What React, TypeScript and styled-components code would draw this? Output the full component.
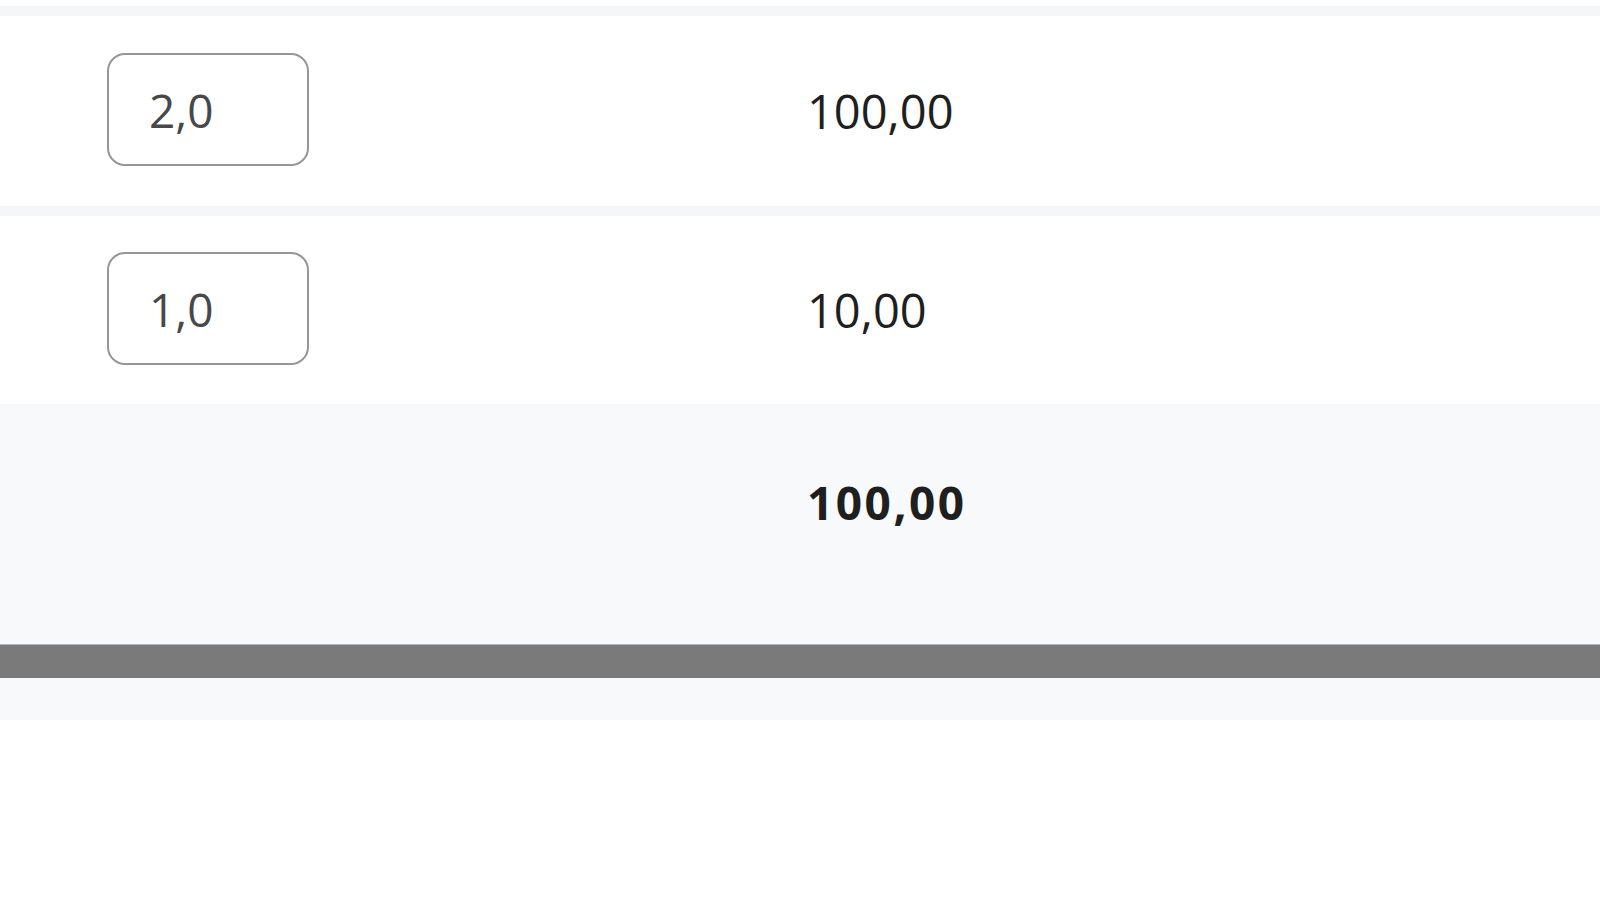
import React from "react";
import styled, { createGlobalStyle } from "styled-components";

const Global = createGlobalStyle`
  html, body { margin: 0; padding: 0; background: #ffffff; }
  body { font-family: "Open Sans", "Noto Sans", sans-serif; }
`;

const Page = styled.div`
  width: 1600px;
  height: 900px;
  background: #ffffff;
  padding-top: 6px;
  box-sizing: border-box;
  display: flex;
  flex-direction: column;
`;

const Divider = styled.div`
  height: 10px;
  background: #f5f6f7;
`;

const Row = styled.div<{ $h: number }>`
  height: ${(p) => p.$h}px;
  display: grid;
  grid-template-columns: 107px 700px 1fr;
  align-items: center;
  background: #ffffff;
`;

const TotalRow = styled.div`
  height: 240px;
  display: grid;
  grid-template-columns: 807px 1fr;
  align-items: start;
  background: #f8f9fa;
  padding-top: 75px;
  box-sizing: border-box;
`;

const QtyInput = styled.input`
  grid-column: 2;
  justify-self: start;
  width: 202px;
  height: 113px;
  margin-top: -3px;
  box-sizing: border-box;
  border: 2px solid #96969a;
  border-radius: 18px;
  padding: 0 0 0 40px;
  font-family: "Open Sans", "Noto Sans", sans-serif;
  font-size: 46px;
  color: #48484a;
  background: #ffffff;
  outline: none;
`;

const Amount = styled.div<{ $bold?: boolean }>`
  grid-column: ${(p) => (p.$bold ? 2 : 3)};
  font-size: ${(p) => (p.$bold ? 46 : 47)}px;
  font-weight: ${(p) => (p.$bold ? 700 : 400)};
  letter-spacing: ${(p) => (p.$bold ? 2.5 : 0)}px;
  color: #1f1f1f;
  line-height: 1;
`;

const ScrollTrack = styled.div`
  height: 76px;
  background: #f8f9fa;
  display: flex;
  flex-direction: column;
`;

const ScrollThumb = styled.div`
  height: 34px;
  background: #7a7a7a;
  border-top: 1px solid #b5b5b5;
  box-sizing: border-box;
`;

export default function App() {
  return (
    <Page>
      <Global />
      <Divider />
      <Row $h={190}>
        <QtyInput defaultValue="2,0" />
        <Amount>100,00</Amount>
      </Row>
      <Divider />
      <Row $h={188}>
        <QtyInput defaultValue="1,0" />
        <Amount>10,00</Amount>
      </Row>
      <TotalRow>
        <Amount $bold>100,00</Amount>
      </TotalRow>
      <ScrollTrack>
        <ScrollThumb />
      </ScrollTrack>
    </Page>
  );
}
